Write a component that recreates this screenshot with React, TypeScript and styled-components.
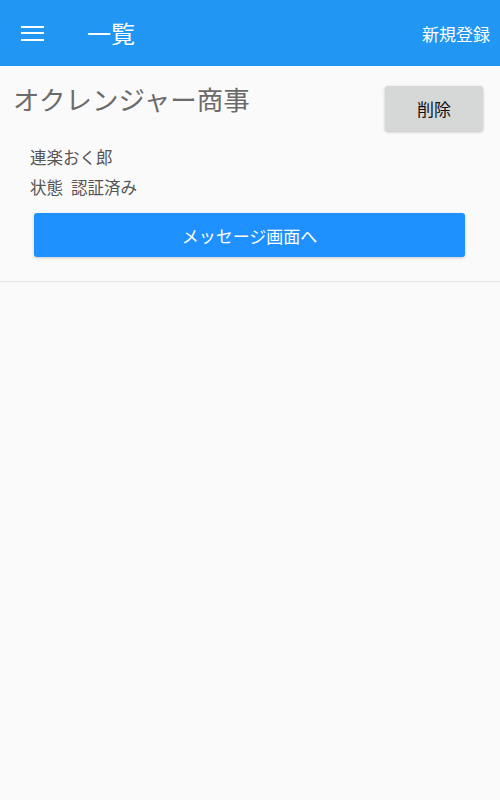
import React from "react";
import styled, { createGlobalStyle } from "styled-components";

const Global = createGlobalStyle`
  html, body { margin: 0; padding: 0; background: #fafafa; }
  body { font-family: "Noto Sans CJK JP", "Noto Sans", Roboto, sans-serif; }
  * { box-sizing: border-box; }
`;

const Page = styled.div`
  min-height: 800px;
  background: #fafafa;
`;

const Header = styled.header`
  height: 66px;
  background: #2196f3;
  display: flex;
  align-items: center;
  padding: 0 10px 0 21px;
  color: #fff;
`;

const MenuButton = styled.div`
  width: 23px;
  display: flex;
  flex-direction: column;
  gap: 4.5px;
  margin-right: 43px;
  span {
    display: block;
    height: 2px;
    background: #fff;
  }
`;

const Title = styled.h1`
  margin: 0;
  font-size: 24px;
  font-weight: 400;
  flex: 1;
  line-height: 1;
`;

const HeaderAction = styled.div`
  font-size: 17px;
  line-height: 1;
`;

const Card = styled.section`
  padding: 20px 17px 24px 13px;
  border-bottom: 1px solid #e5e5e5;
`;

const TitleRow = styled.div`
  display: flex;
  justify-content: space-between;
  align-items: flex-start;
`;

const Company = styled.h2`
  margin: 0;
  font-size: 26.5px;
  font-weight: 400;
  color: #6b6b6b;
  line-height: 26px;
  padding-top: 0;
`;

const DeleteButton = styled.button`
  width: 98px;
  height: 45px;
  border: none;
  border-radius: 3px;
  background: #d6d7d7;
  color: #111;
  font-family: inherit;
  font-size: 17px;
  box-shadow: 0 1px 3px rgba(0, 0, 0, 0.25);
`;

const Info = styled.div`
  padding-left: 17px;
  margin-top: 15px;
  display: flex;
  flex-direction: column;
  gap: 8px;
`;

const InfoLine = styled.div`
  font-size: 16.5px;
  color: #555;
  line-height: 22px;
`;

const Label = styled.span`
  margin-right: 8px;
`;

const PrimaryButton = styled.button`
  display: block;
  margin: 15px 18px 0 21px;
  width: calc(100% - 39px);
  height: 44px;
  border: none;
  border-radius: 3px;
  background: #1e90ff;
  color: #fff;
  font-family: inherit;
  font-size: 17px;
  box-shadow: 0 1px 3px rgba(0, 0, 0, 0.2);
`;

export default function App() {
  return (
    <Page>
      <Global />
      <Header>
        <MenuButton>
          <span />
          <span />
          <span />
        </MenuButton>
        <Title>一覧</Title>
        <HeaderAction>新規登録</HeaderAction>
      </Header>
      <Card>
        <TitleRow>
          <Company>オクレンジャー商事</Company>
          <DeleteButton>削除</DeleteButton>
        </TitleRow>
        <Info>
          <InfoLine>連楽おく郎</InfoLine>
          <InfoLine>
            <Label>状態</Label>認証済み
          </InfoLine>
        </Info>
        <PrimaryButton>メッセージ画面へ</PrimaryButton>
      </Card>
    </Page>
  );
}
